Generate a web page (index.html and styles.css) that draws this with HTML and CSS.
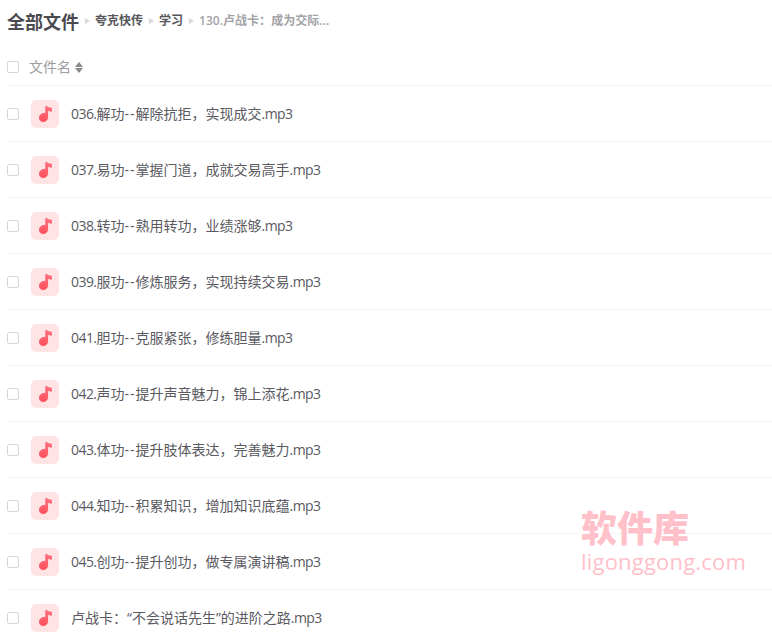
FILE: index.html
```html
<!DOCTYPE html>
<html lang="zh-CN">
<head>
<meta charset="utf-8">
<title>全部文件</title>
<link rel="stylesheet" href="styles.css">
</head>
<body>
<svg class="defs" width="0" height="0" aria-hidden="true"><defs>
<linearGradient id="n" x1="0" y1="0" x2="0" y2="1"><stop offset="0" stop-color="#ff7480"/><stop offset="1" stop-color="#fb4f5c"/></linearGradient>
<symbol id="note" viewBox="0 0 28 28"><path d="M14.200 6.600c0-.7.700-1 1.300-.7l.9.500c1.100.6 2.900 1.100 4 1.400.4.100.6.400.6.800v2.200c0 .6-.5 1-1.100.9-1-.2-2-.5-2.800-.9v6.200c0 2.800-2.200 5-4.800 5-2.500 0-4.300-1.700-4.300-4 0-2.900 2.500-5 5.100-5 .4 0 .8 0 1.100.1z" fill="url(#n)"/></symbol>
</defs></svg>
<main class="page">
<header class="crumbs">
<h1 class="title">全部文件</h1>
<span class="arrow"></span><a class="crumb">夸克快传</a>
<span class="arrow"></span><a class="crumb">学习</a>
<span class="arrow"></span><span class="crumb current">130.卢战卡：成为交际...</span>
</header>
<div class="head">
<span class="check"></span>
<span class="head-label">文件名</span>
<span class="sort"><i class="up"></i><i class="down"></i></span>
</div>
<ul class="list">
<li class="row"><span class="check"></span><span class="icon"><svg width="28" height="28"><use href="#note"/></svg></span><span class="name"><span class="num">036.</span>解功<span class="dash">--</span>解除抗拒，实现成交<span class="num">.mp3</span></span></li>
<li class="row"><span class="check"></span><span class="icon"><svg width="28" height="28"><use href="#note"/></svg></span><span class="name"><span class="num">037.</span>易功<span class="dash">--</span>掌握门道，成就交易高手<span class="num">.mp3</span></span></li>
<li class="row"><span class="check"></span><span class="icon"><svg width="28" height="28"><use href="#note"/></svg></span><span class="name"><span class="num">038.</span>转功<span class="dash">--</span>熟用转功，业绩涨够<span class="num">.mp3</span></span></li>
<li class="row"><span class="check"></span><span class="icon"><svg width="28" height="28"><use href="#note"/></svg></span><span class="name"><span class="num">039.</span>服功<span class="dash">--</span>修炼服务，实现持续交易<span class="num">.mp3</span></span></li>
<li class="row"><span class="check"></span><span class="icon"><svg width="28" height="28"><use href="#note"/></svg></span><span class="name"><span class="num">041.</span>胆功<span class="dash">--</span>克服紧张，修练胆量<span class="num">.mp3</span></span></li>
<li class="row"><span class="check"></span><span class="icon"><svg width="28" height="28"><use href="#note"/></svg></span><span class="name"><span class="num">042.</span>声功<span class="dash">--</span>提升声音魅力，锦上添花<span class="num">.mp3</span></span></li>
<li class="row"><span class="check"></span><span class="icon"><svg width="28" height="28"><use href="#note"/></svg></span><span class="name"><span class="num">043.</span>体功<span class="dash">--</span>提升肢体表达，完善魅力<span class="num">.mp3</span></span></li>
<li class="row"><span class="check"></span><span class="icon"><svg width="28" height="28"><use href="#note"/></svg></span><span class="name"><span class="num">044.</span>知功<span class="dash">--</span>积累知识，增加知识底蕴<span class="num">.mp3</span></span></li>
<li class="row"><span class="check"></span><span class="icon"><svg width="28" height="28"><use href="#note"/></svg></span><span class="name"><span class="num">045.</span>创功<span class="dash">--</span>提升创功，做专属演讲稿<span class="num">.mp3</span></span></li>
<li class="row"><span class="check"></span><span class="icon"><svg width="28" height="28"><use href="#note"/></svg></span><span class="name">卢战卡：“不会说话先生”的进阶之路<span class="num">.mp3</span></span></li>
</ul>
</main>
<div class="mark"><div class="mark-cn">软件库</div><div class="mark-en">ligonggong.com</div></div>
</body>
</html>
```
FILE: styles.css
```css
* { box-sizing: border-box; }
html, body { margin: 0; height: 640px; overflow: hidden; background: #fff; }
body { font-family: "Open Sans", "Noto Sans CJK SC", sans-serif; color: #4f4f54; }
.defs { position: absolute; }
.page { padding-left: 7px; }
.crumbs { display: flex; align-items: center; height: 42px; }
.title { margin: 0; font: 700 18px/24px "Noto Sans CJK SC", sans-serif; color: #4a4a50; }
.arrow { width: 0; height: 0; margin: 0 5px 0 6px; border-left: 5px solid #d9d9dc; border-top: 3.5px solid transparent; border-bottom: 3.5px solid transparent; }
.crumb { font: 600 12px/16px "Open Sans", "Noto Sans CJK SC", sans-serif; color: #55555a; }
.current { color: #a3a3a8; letter-spacing: .03px; }
.head { display: flex; align-items: center; height: 44px; padding-top: 7px; border-bottom: 1px solid #f3f3f4; }
.head .check { margin-right: 10px; }
.head-label { font-size: 14px; line-height: 20px; color: #9c9ca1; }
.sort { display: flex; flex-direction: column; gap: 1px; margin-left: 4px; }
.sort i { display: block; width: 0; height: 0; border-left: 4px solid transparent; border-right: 4px solid transparent; }
.sort .up { border-bottom: 5px solid #88888d; }
.sort .down { border-top: 5px solid #88888d; }
.check { flex: none; width: 12px; height: 12px; border: 1px solid #d6d6d9; border-radius: 2px; background: #fff; }
.list { margin: 0; padding: 0; list-style: none; }
.row { display: flex; align-items: center; height: 56px; border-bottom: 1px solid #f3f3f4; }
.icon { flex: none; display: block; width: 28px; height: 28px; margin: 0 12px; border-radius: 5px; background: #ffe3e5; }
.icon svg { display: block; }
.name { font-size: 14px; line-height: 20px; color: #5a5a5f; white-space: nowrap; }
.num { letter-spacing: -.55px; }
.dash { letter-spacing: 1px; }
.mark { position: absolute; left: 581px; top: 506px; }
.mark-cn { font: 900 36px/40px "Noto Sans CJK SC", sans-serif; color: #ffc0c9; }
.mark-en { margin-top: 3px; font: 500 22px/24px "Open Sans", sans-serif; letter-spacing: .2px; color: #ffc0c9; white-space: nowrap; }
```
